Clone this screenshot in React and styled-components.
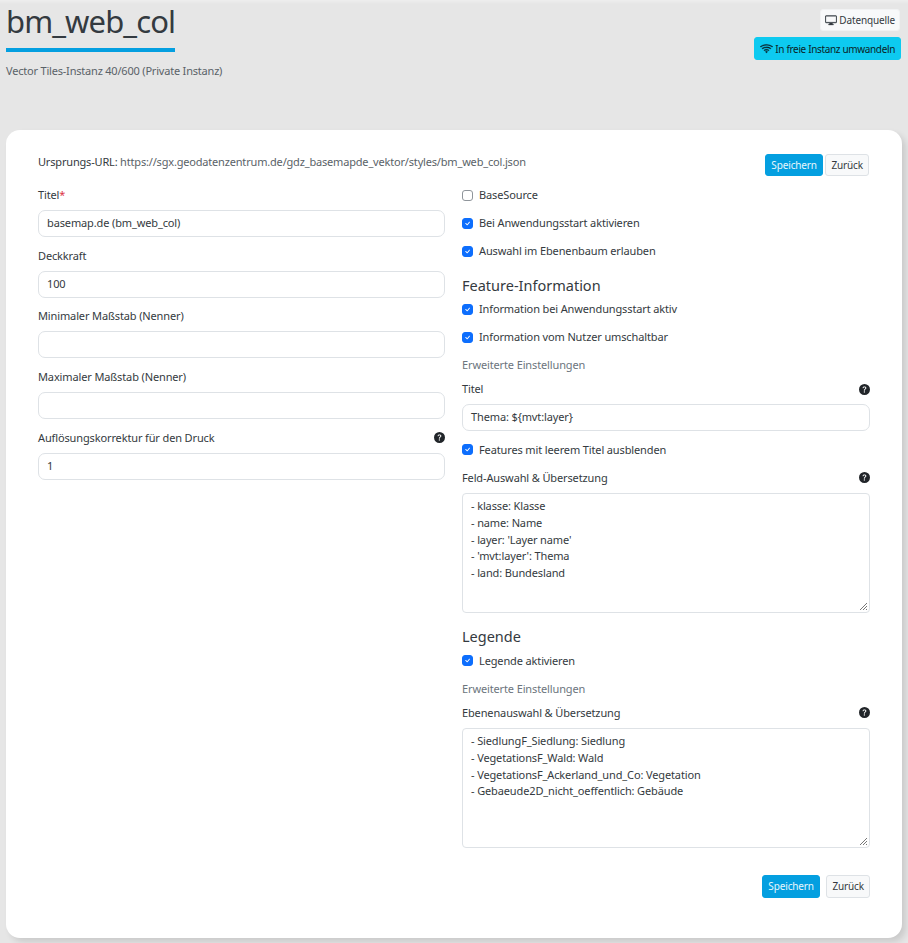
import React from "react";
import styled, { createGlobalStyle } from "styled-components";
import { BsDisplay, BsWifi, BsQuestionCircleFill, BsCheck } from "react-icons/bs";

const GlobalStyle = createGlobalStyle`
  html, body {
    margin: 0;
    padding: 0;
    background: #e6e6e6;
  }
  body {
    font-family: "Noto Sans", "Open Sans", sans-serif;
    font-size: 11px;
    letter-spacing: -0.13px;
    color: #343a40;
  }
  * {
    box-sizing: border-box;
  }
`;

const Page = styled.div`
  width: 908px;
  height: 943px;
  padding: 0 6px;
  overflow: hidden;
  background: linear-gradient(#eeeeee, #e6e6e6 4px);
`;

const Header = styled.header`
  height: 130px;
  display: flex;
  justify-content: space-between;
`;

const PageTitle = styled.h1`
  display: inline-block;
  margin: 0;
  padding-bottom: 6px;
  font-size: 31px;
  line-height: 42px;
  letter-spacing: -0.9px;
  font-weight: 400;
  color: #343a40;
  border-bottom: 4px solid #049fe0;
`;

const SubTitle = styled.p`
  margin: 10px 0 0;
  line-height: 18px;
  letter-spacing: -0.2px;
  color: #5a6268;
`;

const HeaderActions = styled.div`
  display: flex;
  flex-direction: column;
  align-items: flex-end;
  gap: 6px;
  padding-top: 9px;
`;

const SmallButton = styled.button`
  display: inline-flex;
  align-items: center;
  justify-content: center;
  gap: 2px;
  height: ${(props) => props.$height || 22}px;
  padding: 0 ${(props) => props.$pad || 5}px;
  font-family: inherit;
  font-size: 10px;
  letter-spacing: inherit;
  white-space: nowrap;
  border-radius: 3px;
  border: 1px solid ${(props) => props.$border};
  background: ${(props) => props.$bg};
  color: ${(props) => props.$color};

  svg {
    stroke: currentColor;
    stroke-width: 0.5px;
  }
`;

const SourceButton = styled(SmallButton)`
  margin-right: 2px;
`;

const ConvertButton = styled(SmallButton)`
  margin-right: 1px;
  letter-spacing: -0.35px;
`;

const Card = styled.main`
  height: 808px;
  padding: 24px 32px 0;
  background: #fff;
  border-radius: 14px;
  box-shadow: 4px 4px 6px rgba(0, 0, 0, 0.12);
`;

const UrlRow = styled.div`
  display: flex;
  justify-content: space-between;
  align-items: flex-start;
  height: 32px;
`;

const UrlText = styled.div`
  line-height: 16px;
  letter-spacing: -0.18px;
  color: #5a6268;

  strong {
    font-weight: 400;
    color: #343a40;
  }
`;

const ButtonRow = styled.div`
  display: flex;
  justify-content: flex-end;
  gap: ${(props) => props.$gap}px;
  margin-right: ${(props) => props.$inset || 0}px;
  margin-top: ${(props) => props.$top || 0}px;
`;

const Columns = styled.div`
  display: grid;
  grid-template-columns: 407px 408px;
  column-gap: 17px;
  align-items: start;
`;

const Field = styled.div`
  margin-bottom: ${(props) => props.$gap}px;
`;

const LabelRow = styled.div`
  display: flex;
  justify-content: space-between;
  align-items: center;
  height: 18px;
  margin-bottom: 6px;
  padding-bottom: 1px;
  color: #343a40;

  em {
    font-style: normal;
    color: #dc3545;
  }
`;

const HelpIcon = styled(BsQuestionCircleFill)`
  width: 11px;
  height: 11px;
  margin-top: 1px;
  color: #212529;
`;

const TextInput = styled.div`
  height: 27px;
  padding: 0 8px 2px;
  display: flex;
  align-items: center;
  color: #343a40;
  border: 1px solid #dee2e6;
  border-radius: 7px;
`;

const TextArea = styled.div`
  position: relative;
  height: 120px;
  padding: 4px 8px;
  line-height: 16.9px;
  color: #343a40;
  white-space: pre;
  border: 1px solid #dee2e6;
  border-radius: 4px;
`;

const Grip = styled.svg`
  position: absolute;
  right: 1px;
  bottom: 1px;
  width: 9px;
  height: 9px;
`;

const CheckRow = styled.div`
  display: flex;
  align-items: center;
  gap: 6px;
  height: 18px;
  margin-bottom: 10px;
  color: #343a40;

  span:last-child {
    margin-top: -1px;
  }
`;

const Box = styled.i`
  display: inline-flex;
  align-items: center;
  justify-content: center;
  width: 11px;
  height: 11px;
  border-radius: 3px;
  color: #fff;
  background: ${(props) => (props.$checked ? "#0d6efd" : "#fff")};
  border: 1px solid ${(props) => (props.$checked ? "#0d6efd" : "#8f959b")};
`;

const SectionTitle = styled.h3`
  display: flex;
  align-items: center;
  height: 30px;
  margin: 0;
  padding-bottom: 1px;
  font-size: 14.5px;
  letter-spacing: 0;
  font-weight: 400;
  color: #343a40;
`;

const Muted = styled.div`
  height: 18px;
  line-height: 18px;
  margin-bottom: 6px;
  color: #6c757d;
`;

const Check = ({ checked = true, children }) => (
  <CheckRow>
    <Box $checked={checked}>{checked && <BsCheck size={11} />}</Box>
    <span>{children}</span>
  </CheckRow>
);

const InputField = ({ label, value, help, required }) => (
  <Field $gap={9.7}>
    <LabelRow>
      <span>
        {label}
        {required && <em>*</em>}
      </span>
      {help && <HelpIcon />}
    </LabelRow>
    <TextInput>{value}</TextInput>
  </Field>
);

const AreaField = ({ label, value }) => (
  <Field $gap={9}>
    <LabelRow>
      <span>{label}</span>
      <HelpIcon />
    </LabelRow>
    <TextArea>
      {value}
      <Grip viewBox="0 0 9 9">
        <path d="M8 1 1 8M8 4 4 8M8 7 7 8" stroke="#777" strokeWidth="1" fill="none" />
      </Grip>
    </TextArea>
  </Field>
);

const SaveButton = (props) => (
  <SmallButton $bg="#049fe0" $border="#049fe0" $color="#e8f7fd" $pad={5.5} {...props}>
    Speichern
  </SmallButton>
);

const BackButton = (props) => (
  <SmallButton $bg="#f8f9fa" $border="#dee2e6" $color="#343a40" {...props}>
    Zurück
  </SmallButton>
);

const fieldText = `- klasse: Klasse
- name: Name
- layer: 'Layer name'
- 'mvt:layer': Thema
- land: Bundesland`;

const layerText = `- SiedlungF_Siedlung: Siedlung
- VegetationsF_Wald: Wald
- VegetationsF_Ackerland_und_Co: Vegetation
- Gebaeude2D_nicht_oeffentlich: Gebäude`;

export default function App() {
  return (
    <Page>
      <GlobalStyle />
      <Header>
        <div>
          <PageTitle>bm_web_col</PageTitle>
          <SubTitle>Vector Tiles-Instanz 40/600 (Private Instanz)</SubTitle>
        </div>
        <HeaderActions>
          <SourceButton $bg="#f8f9fa" $border="#f1f2f3" $color="#343a40" $pad={4}>
            <BsDisplay size={12} /> Datenquelle
          </SourceButton>
          <ConvertButton $bg="#0dcaf0" $border="#0dcaf0" $color="#0b1e26" $height={23}>
            <BsWifi size={13} /> In freie Instanz umwandeln
          </ConvertButton>
        </HeaderActions>
      </Header>
      <Card>
        <UrlRow>
          <UrlText>
            <strong>Ursprungs-URL:</strong> https://sgx.geodatenzentrum.de/gdz_basemapde_vektor/styles/bm_web_col.json
          </UrlText>
          <ButtonRow $gap={2} $inset={1}>
            <SaveButton />
            <BackButton />
          </ButtonRow>
        </UrlRow>
        <Columns>
          <div>
            <InputField label="Titel" value="basemap.de (bm_web_col)" required />
            <InputField label="Deckkraft" value="100" />
            <InputField label="Minimaler Maßstab (Nenner)" />
            <InputField label="Maximaler Maßstab (Nenner)" />
            <InputField label="Auflösungskorrektur für den Druck" value="1" help />
          </div>
          <div>
            <Check checked={false}>BaseSource</Check>
            <Check>Bei Anwendungsstart aktivieren</Check>
            <Check>Auswahl im Ebenenbaum erlauben</Check>
            <SectionTitle>Feature-Information</SectionTitle>
            <Check>Information bei Anwendungsstart aktiv</Check>
            <Check>Information vom Nutzer umschaltbar</Check>
            <Muted>Erweiterte Einstellungen</Muted>
            <InputField label="Titel" value="Thema: ${mvt:layer}" help />
            <Check>Features mit leerem Titel ausblenden</Check>
            <AreaField label="Feld-Auswahl & Übersetzung" value={fieldText} />
            <SectionTitle>Legende</SectionTitle>
            <Check>Legende aktivieren</Check>
            <Muted>Erweiterte Einstellungen</Muted>
            <AreaField label="Ebenenauswahl & Übersetzung" value={layerText} />
            <ButtonRow $gap={6} $top={27}>
              <SaveButton $height={23} />
              <BackButton $height={23} />
            </ButtonRow>
          </div>
        </Columns>
      </Card>
    </Page>
  );
}
